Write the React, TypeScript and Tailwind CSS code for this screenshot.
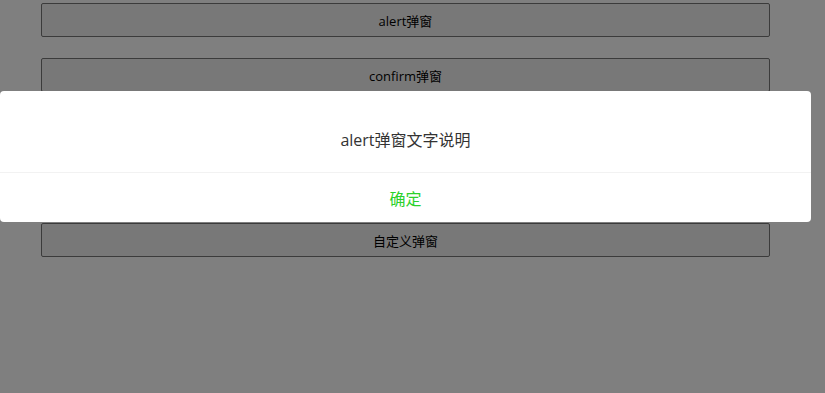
export default function App() {
  const buttons = ['alert弹窗', 'confirm弹窗', '', '', '自定义弹窗']

  return (
    <div
      className="relative h-[393px] w-[825px] overflow-hidden bg-white"
      style={{ fontFamily: '"Open Sans", "Noto Sans CJK SC", sans-serif' }}
    >
      {/* Page buttons */}
      <div className="flex w-[811px] flex-col gap-[21px] px-[41px] pt-[3px]">
        {buttons.map((b, i) => (
          <button
            key={i}
            className="h-[34px] w-full rounded-[2px] border border-[#767676] bg-[#f0f0f0] pt-[4px] text-[13px] text-black"
          >
            {b}
          </button>
        ))}
      </div>

      {/* Mask */}
      <div className="absolute inset-0 bg-black/50" />

      {/* Alert dialog */}
      <div className="absolute left-0 top-[91px] w-[811px] rounded-[4px] bg-white">
        <div className="flex h-[82px] items-center justify-center border-b border-[#f2f2f2] pt-[17px] text-[16px] text-[#333]">
          alert弹窗文字说明
        </div>
        <div className="flex h-[49px] items-center justify-center pt-[3px] text-[16px] text-[#2bd12b]">
          确定
        </div>
      </div>
    </div>
  )
}
